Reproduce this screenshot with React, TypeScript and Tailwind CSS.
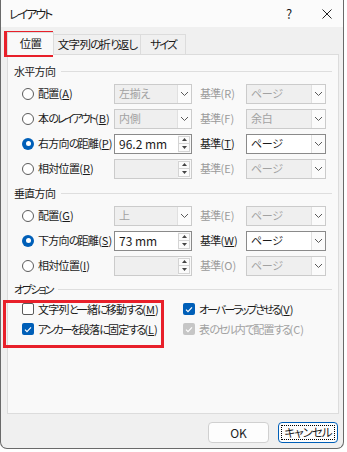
import React from "react";

// kana runs are set tighter than kanji, like the proportional UI face in the dialog
const T = ({ s }: { s: string }) => (
  <>
    {s.split(/([\u3040-\u30ff]+)/).map((p, i) =>
      /[\u3040-\u30ff]/.test(p) ? (
        <span key={i} className="tracking-[-2px]">
          {p}
        </span>
      ) : (
        p
      )
    )}
  </>
);

const Chevron = () => (
  <svg width="9" height="6" viewBox="0 0 9 6">
    <polyline points="1,1 4.5,4.5 8,1" fill="none" stroke="#5a5a5a" strokeWidth="1" />
  </svg>
);

// access key like (A), latin part keeps normal spacing
const K = ({ c, plain }: { c: string; plain?: boolean }) => (
  <span className="tracking-normal">({plain ? c : <u>{c}</u>})</span>
);

const Radio = ({ checked }: { checked?: boolean }) =>
  checked ? (
    <span className="w-[12px] h-[12px] rounded-full bg-[#005fb8] flex items-center justify-center shrink-0">
      <span className="w-[5px] h-[5px] rounded-full bg-white" />
    </span>
  ) : (
    <span className="w-[12px] h-[12px] rounded-full border border-[#5b5b5b] bg-white shrink-0" />
  );

const Check = ({ checked, disabled }: { checked?: boolean; disabled?: boolean }) => {
  if (!checked)
    return <span className="w-[12px] h-[12px] rounded-[2px] border border-[#5b5b5b] bg-white shrink-0" />;
  return (
    <span
      className={
        "w-[12px] h-[12px] rounded-[2px] flex items-center justify-center shrink-0 " +
        (disabled ? "bg-[#c6c6c6]" : "bg-[#005fb8]")
      }
    >
      <svg width="8" height="7" viewBox="0 0 8 7">
        <polyline points="1,3.6 3,5.6 7,1.4" fill="none" stroke="#fff" strokeWidth="1.2" />
      </svg>
    </span>
  );
};

const Combo = ({ value, disabled, w }: { value: string; disabled?: boolean; w: string }) => (
  <div
    className={
      "h-[20px] flex border " +
      w +
      (disabled ? " border-[#cbcbcb]" : " border-[#8a8a8a]")
    }
  >
    <div
      className={
        "flex-1 flex items-center pl-[4px] tracking-[-0.3px] " +
        (disabled ? "bg-[#efefef] text-[#a2a2a2]" : "bg-white text-[#1b1b1b]")
      }
    >
      {value}
    </div>
    <div className="w-[14px] border-l border-[#e0e0e0] bg-[#fbfbfb] flex items-center justify-center">
      <Chevron />
    </div>
  </div>
);

const Spin = ({ value, disabled }: { value: string; disabled?: boolean }) => (
  <div className={"h-[20px] w-[78px] flex border " + (disabled ? "border-[#cbcbcb]" : "border-[#8a8a8a]")}>
    <div
      className={
        "flex-1 flex items-center pl-[4px] tracking-normal text-[12px] " +
        (disabled ? "bg-[#efefef]" : "bg-white text-[#1b1b1b]")
      }
    >
      {value}
    </div>
    <div className="w-[12px] my-[1px] mr-[1px] flex flex-col border border-[#d4d4d4] bg-[#fbfbfb]">
      <div className="flex-1 flex items-center justify-center border-b border-[#d4d4d4]">
        <svg width="5" height="3" viewBox="0 0 5 3">
          <polygon points="0,3 2.5,0 5,3" fill="#444" />
        </svg>
      </div>
      <div className="flex-1 flex items-center justify-center">
        <svg width="5" height="3" viewBox="0 0 5 3">
          <polygon points="0,0 2.5,3 5,0" fill="#444" />
        </svg>
      </div>
    </div>
  </div>
);

const Header = ({ text, className }: { text: string; className?: string }) => (
  <div className={"h-[20px] flex items-center " + (className || "")}>
    <span className="text-[#1b1b1b]">
      <T s={text} />
    </span>
    <span className="flex-1 h-px bg-[#dedede] ml-[6px]" />
  </div>
);

const Row = ({
  checked,
  label,
  keyChar,
  control,
  kijunKey,
  kijunOn,
  right,
}: {
  checked?: boolean;
  label: string;
  keyChar: string;
  control: React.ReactNode;
  kijunKey: string;
  kijunOn?: boolean;
  right: React.ReactNode;
}) => (
  <div className="h-[25px] flex items-center">
    <div className="w-[100px] pl-[8px] flex items-center gap-[4px] text-[#1b1b1b]">
      <Radio checked={checked} />
      <span>
        <T s={label} />
        <K c={keyChar} />
      </span>
    </div>
    {control}
    <div className={"w-[46px] ml-[8px] " + (kijunOn ? "text-[#1b1b1b]" : "text-[#9b9b9b]")}>
      基準<K c={kijunKey} plain={!kijunOn} />
    </div>
    {right}
  </div>
);

export default function App() {
  return (
    <div className="w-[347px] h-[452px] bg-white relative font-['Noto_Sans_CJK_JP',sans-serif] text-[11px] leading-none tracking-[-0.7px] whitespace-nowrap [font-feature-settings:'palt'] text-[#1b1b1b]">
      <div className="w-[344px] h-[449px] bg-[#f0f0f0] border-l border-r border-b border-[#6a6a6a] rounded-b-[7px] flex flex-col">
        {/* title bar */}
        <div className="h-[27px] bg-[#fbfbfb] flex items-center pl-[8px] text-[12px]">
          <span className="flex-1">
            <T s="レイアウト" />
          </span>
          <span className="w-[10px] mr-[26px] text-[13px]">?</span>
          <span className="mr-[11px]">
            <svg width="10" height="10" viewBox="0 0 10 10">
              <path d="M0.5 0.5 L9.5 9.5 M9.5 0.5 L0.5 9.5" stroke="#222" strokeWidth="1" />
            </svg>
          </span>
        </div>

        {/* tabs */}
        <div className="h-[27px] pt-[4px] pl-[6px] flex items-end relative z-10 text-[11.5px]">
          <div className="w-[47px] h-[23px] -mb-px bg-[#f9f9f9] border-t border-l border-r border-[#dcdcdc] flex items-center justify-center">
            位置
          </div>
          <div className="w-[87px] h-[20px] bg-[#f0f0f0] border-t border-r border-[#dcdcdc] flex items-center justify-center">
            <T s="文字列の折り返し" />
          </div>
          <div className="w-[45px] h-[20px] bg-[#f0f0f0] border-t border-r border-[#dcdcdc] flex items-center justify-center">
            <T s="サイズ" />
          </div>
        </div>

        {/* panel */}
        <div className="ml-[6px] w-[332px] h-[360px] bg-[#f9f9f9] border border-[#dcdcdc] px-[6px] pt-[6px]">
          <Header text="水平方向" />
          <Row
            label="配置"
            keyChar="A"
            control={<Combo value="左揃え" disabled w="w-[78px]" />}
            kijunKey="R"
            right={<Combo value="ページ" disabled w="w-[80px]" />}
          />
          <Row
            label="本のレイアウト"
            keyChar="B"
            control={<Combo value="内側" disabled w="w-[78px]" />}
            kijunKey="F"
            right={<Combo value="余白" disabled w="w-[80px]" />}
          />
          <Row
            checked
            label="右方向の距離"
            keyChar="P"
            control={<Spin value="96.2 mm" />}
            kijunKey="T"
            kijunOn
            right={<Combo value="ページ" w="w-[80px]" />}
          />
          <Row
            label="相対位置"
            keyChar="R"
            control={<Spin value="" disabled />}
            kijunKey="E"
            right={<Combo value="ページ" disabled w="w-[80px]" />}
          />

          <Header text="垂直方向" className="mt-[2px]" />
          <Row
            label="配置"
            keyChar="G"
            control={<Combo value="上" disabled w="w-[78px]" />}
            kijunKey="E"
            right={<Combo value="ページ" disabled w="w-[80px]" />}
          />
          <Row
            checked
            label="下方向の距離"
            keyChar="S"
            control={<Spin value="73 mm" />}
            kijunKey="W"
            kijunOn
            right={<Combo value="ページ" w="w-[80px]" />}
          />
          <Row
            label="相対位置"
            keyChar="I"
            control={<Spin value="" disabled />}
            kijunKey="O"
            right={<Combo value="ページ" disabled w="w-[80px]" />}
          />

          <Header text="オプション" className="mt-[1px]" />
          <div className="grid grid-cols-[161px_1fr] pl-[8px]">
            <div className="h-[20px] flex items-center gap-[4px]">
              <Check />
              <span>
                <T s="文字列と一緒に移動する" />
                <K c="M" />
              </span>
            </div>
            <div className="h-[20px] flex items-center gap-[4px]">
              <Check checked />
              <span>
                <T s="オーバーラップさせる" />
                <K c="V" />
              </span>
            </div>
            <div className="h-[20px] flex items-center gap-[4px]">
              <Check checked />
              <span>
                <T s="アンカーを段落に固定する" />
                <K c="L" />
              </span>
            </div>
            <div className="h-[20px] flex items-center gap-[4px] text-[#a2a2a2]">
              <Check checked disabled />
              <span>
                <T s="表のセル内で配置する" />
                <K c="C" plain />
              </span>
            </div>
          </div>
        </div>

        {/* buttons */}
        <div className="mt-[8px] flex justify-end gap-[9px] pr-[5px]">
          <button className="w-[61px] h-[21px] bg-[#fdfdfd] border border-[#d0d0d0] rounded-[4px] text-[12px] tracking-normal">
            OK
          </button>
          <button className="w-[60px] h-[21px] bg-[#fdfdfd] border border-[#005fb8] rounded-[4px] text-[11.5px] tracking-[-1px] outline-1 outline-dotted outline-black outline-offset-[-4px]">
            キャンセル
          </button>
        </div>
      </div>

      {/* annotation frames */}
      <div className="absolute left-[4px] top-[31px] w-[49px] h-[26px] border-[3px] border-[#e8202a]" />
      <div className="absolute left-[3px] top-[300px] w-[161px] h-[48px] border-[3px] border-[#e8202a]" />
    </div>
  );
}
